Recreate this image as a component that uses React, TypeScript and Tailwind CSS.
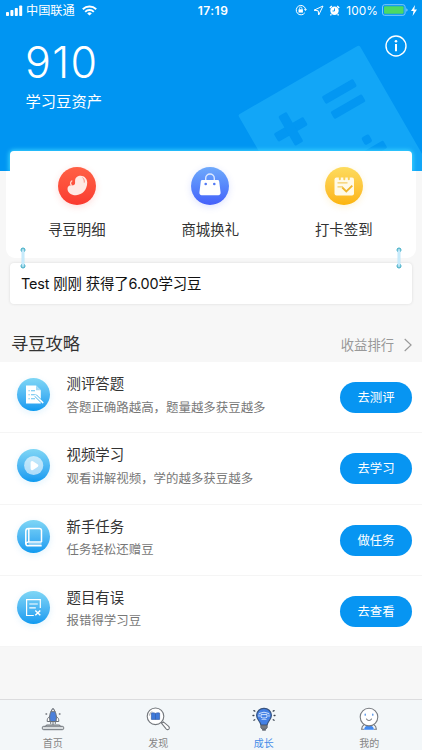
import type { ReactNode } from "react";

function StatusBar() {
  return (
    <div className="relative flex h-5 items-center text-white">
      <svg className="ml-1.5 h-[11px] w-[17px]" viewBox="0 0 17 11" fill="currentColor">
        <rect x="0" y="7" width="3" height="4" rx="0.8" />
        <rect x="4.4" y="5" width="3" height="6" rx="0.8" />
        <rect x="8.8" y="3" width="3" height="8" rx="0.8" />
        <rect x="13.2" y="0.5" width="3" height="10.5" rx="0.8" />
      </svg>
      <span className="mt-[2px] ml-[3px] text-[12.2px] leading-5">中国联通</span>
      <svg className="ml-[7px] h-[11px] w-[15px]" viewBox="0 0 15 11" fill="none" stroke="currentColor" strokeWidth="1.9">
        <path d="M.8 4.2a9.6 9.6 0 0 1 13.4 0M3.2 6.8a6.1 6.1 0 0 1 8.6 0" />
        <path d="M7.5 10.6 5.2 8.4a3.3 3.3 0 0 1 4.6 0z" fill="currentColor" stroke="none" />
      </svg>
      <span className="absolute top-[1px] left-1/2 ml-0.5 -translate-x-1/2 text-[12px] leading-5 font-semibold tracking-[0.5px]">
        17:19
      </span>
      <div className="ml-auto flex items-center">
        <svg className="h-3 w-3" viewBox="0 0 12 12" fill="none" stroke="currentColor">
          <path d="M9.8 8.8A4.7 4.7 0 1 1 10.5 5" />
          <path d="m8.8 5.3 1.8 1.8 1.3-2z" fill="currentColor" stroke="none" />
          <rect x="3.5" y="5.3" width="4.4" height="3.3" fill="currentColor" stroke="none" />
          <path d="M4.5 5.5V4.3a1.2 1.2 0 0 1 2.4 0v1.2" strokeWidth=".8" />
        </svg>
        <svg className="ml-[6px] h-[11px] w-[11px]" viewBox="0 0 11 11" fill="none" stroke="currentColor" strokeLinejoin="round">
          <path d="M10 1 1 5.2l4.2.6.5 4.2z" />
        </svg>
        <svg className="ml-[5px] h-[11px] w-[11px]" viewBox="0 0 11 11">
          <circle cx="5.5" cy="5.8" r="4.2" fill="white" />
          <path d="m.8 3 2-2M10.2 3l-2-2M2.4 9.2 1.4 10.4M8.6 9.2l1 1.2" stroke="white" strokeWidth="1.4" />
          <path d="M5.5 3.4V6h-2" stroke="#0095f2" fill="none" strokeWidth=".9" />
        </svg>
        <span className="mt-px ml-[6px] text-[11.8px] leading-5 tracking-[0.1px]">100%</span>
        <svg className="ml-[4px] h-3 w-[27px]" viewBox="0 0 27 12">
          <rect x=".5" y=".7" width="22.6" height="10.6" rx="2.2" fill="none" stroke="#7fcafa" />
          <rect x="2" y="2.2" width="19.6" height="7.6" rx="1" fill="#4cd964" />
          <path d="M24.4 4.2c1.5.6 1.5 3 0 3.6z" fill="#9bd5fb" />
        </svg>
        <svg className="mr-[5px] ml-[2px] h-[11px] w-[6px]" viewBox="0 0 6 11" fill="currentColor">
          <path d="M4 0 0 6h2.5L1.6 11 6 4.5H3.3z" />
        </svg>
      </div>
    </div>
  );
}

// Tilted calculator drawn behind the balance
function Calculator() {
  return (
    <svg className="absolute top-0 right-0 h-[171px] w-[190px]" viewBox="232 0 190 171">
      <g transform="translate(238 115) rotate(-30)">
        <rect width="140" height="190" rx="2" fill="#12a6f7" />
        <g fill="#0397f2">
          <rect x="21.5" y="34" width="34" height="9.5" rx="1.5" />
          <rect x="34" y="21.5" width="9.5" height="34" rx="1.5" />
          <rect x="81.5" y="26" width="36" height="8.5" rx="1.5" />
          <rect x="81.5" y="43.5" width="36" height="8.5" rx="1.5" />
          <rect x="95" y="81.5" width="8.5" height="8.5" rx="2" />
          <rect x="79" y="94.5" width="34" height="8.5" rx="1.5" />
        </g>
      </g>
    </svg>
  );
}

const shortcuts: { label: string; circle: string; icon: ReactNode }[] = [
  {
    label: "寻豆明细",
    circle: "bg-linear-to-b from-[#ff6045] to-[#fa3a30] shadow-[0_2px_7px_rgba(250,70,60,0.18)]",
    icon: (
      <svg viewBox="0 0 38 38">
        <path d="M18.5 10.2c4.6-3.5 10.8-.4 10.7 5.4-.1 7.4-4.8 12.4-11.2 12.6-4.7.1-8.4-2.7-8.5-6.3 0-2.6 2-4 4.3-3.6 2.3.4 3.4-.5 3.3-2.7-.1-2.3-.1-4.1 1.4-5.4z" fill="#ffe9e4" />
        <path d="M13.6 18.2c-1.5-.8-1.4-3 .2-4.2" fill="none" stroke="#ffd6cd" strokeWidth="1.3" strokeLinecap="round" />
        <path d="M24.8 10.8c1.2 1 1.7 2.8 1.5 4.4" fill="none" stroke="#fb8a7a" strokeWidth="1" strokeLinecap="round" />
      </svg>
    ),
  },
  {
    label: "商城换礼",
    circle: "bg-linear-to-b from-[#6fa9fb] to-[#4660fa] shadow-[0_2px_7px_rgba(70,100,250,0.18)]",
    icon: (
      <svg viewBox="0 0 38 38">
        <path d="M14.7 13v-1.7a4.3 4.3 0 0 1 8.6 0V13" fill="none" stroke="#dce9ff" strokeWidth="1.4" />
        <path d="M11.5 13h15c.9 0 1.5.5 1.7 1.4l1.4 11.2c.2 1.5-.7 2.6-2.2 2.6H10.6c-1.5 0-2.4-1.1-2.2-2.6l1.4-11.2c.2-.9.8-1.4 1.7-1.4z" fill="white" />
        <circle cx="14.7" cy="17" r="1.3" fill="#5279f5" />
        <circle cx="23.3" cy="17" r="1.3" fill="#5279f5" />
      </svg>
    ),
  },
  {
    label: "打卡签到",
    circle: "bg-linear-to-b from-[#fddb5c] to-[#fcb405] shadow-[0_2px_7px_rgba(252,190,20,0.18)]",
    icon: (
      <svg viewBox="0 0 38 38">
        <rect x="9.5" y="10.5" width="19.5" height="18" rx="2" fill="#fffae8" />
        <path d="M14.8 10.2v2M19.3 10.2v2M23.8 10.2v2" stroke="#fbd052" strokeWidth="2" strokeLinecap="round" />
        <path d="M12.5 15.8h10M12.5 19.8h5.5" stroke="#f5cd64" strokeWidth="1.2" />
        <path d="m17.3 20.5 4 4 6-5.8" fill="none" stroke="#efb52d" strokeWidth="1.8" />
      </svg>
    ),
  },
];

const tasks: { title: string; desc: string; action: string; icon: ReactNode }[] = [
  {
    title: "测评答题",
    desc: "答题正确路越高，题量越多获豆越多",
    action: "去测评",
    icon: (
      <>
        <path d="M9 7.5h10l4.8 4.8v13.2H9z" fill="white" />
        <path d="M19 7.5v4.8h4.8z" fill="#a2daf8" />
        <path d="M11.5 12.8h1.2M14 12.8h4M11.5 16.8h1.2M14 16.8h5M11.5 20.8h1.2M14 20.8h4" stroke="#62c0ee" strokeWidth="1.1" />
        <path d="m18.5 17.5 6 6" stroke="#4db4ea" strokeWidth="3" />
        <path d="m18.2 17.2 7.6 7.4" stroke="white" strokeWidth="1.5" strokeLinecap="round" />
      </>
    ),
  },
  {
    title: "视频学习",
    desc: "观看讲解视频，学的越多获豆越多",
    action: "去学习",
    icon: (
      <>
        <circle cx="16.7" cy="16.5" r="9.6" fill="white" fillOpacity=".6" />
        <path d="M14.6 13.6v6c0 .5.4.7.8.5l4.6-2.9c.5-.3.5-.9 0-1.2l-4.6-2.9c-.4-.2-.8 0-.8.5z" fill="white" stroke="white" strokeWidth="2" strokeLinejoin="round" />
      </>
    ),
  },
  {
    title: "新手任务",
    desc: "任务轻松还赠豆",
    action: "做任务",
    icon: (
      <g fill="none" stroke="white" strokeWidth="1.5">
        <path d="M24.5 22V10.6c0-1.4-.8-2.2-2.2-2.2H11.4c-1.7 0-2.6.9-2.6 2.6v12.2c0 1.7 1 2.6 2.6 2.6h13.3" />
        <path d="M24.7 22H11.7c-1.7 0-2.9.6-2.9 2M11.8 9v12.8" />
        <path d="M11.5 24h13" strokeOpacity=".6" />
      </g>
    ),
  },
  {
    title: "题目有误",
    desc: "报错得学习豆",
    action: "去查看",
    icon: (
      <g fill="none" stroke="white" strokeWidth="1.2">
        <path d="M23.3 17V8.6H9.6v15.9h7.2" />
        <path d="M12.3 13h8.5M12.3 16.8h6.5" />
        <path d="m18.3 19.5 5 4.8m0-4.8-5 4.8" strokeWidth="1.5" />
      </g>
    ),
  },
];

const tabs: { label: string; active?: boolean; icon: ReactNode }[] = [
  {
    label: "首页",
    icon: (
      <g stroke="#6b7077" strokeWidth="1" fill="none">
        <path d="M9 9.3c-2 1.1-3 2.6-2.8 5.2h3zM15 9.3c2 1.1 3 2.6 2.8 5.2h-3z" fill="white" />
        <path d="M9.2 14.5c-1.3-5-.3-9.8 2.8-13 3.1 3.2 4.1 8 2.8 13z" fill="#4b80db" />
        <path d="M10.1 4.7c.5-1.3 1.1-2.3 1.9-3.2.8.9 1.4 1.9 1.9 3.2z" fill="white" />
        <path d="M9.7 14.7v2.2M12 14.7v3.2M14.3 14.7v2.2" />
        <rect x="1.3" y="19.3" width="21.4" height="3.4" rx="1.4" fill="#d9dddf" />
        <path d="M4.5 19.3c.2-.9.8-1.3 1.6-1.3h11.8c.8 0 1.4.4 1.6 1.3" fill="#b8bdbf" />
        <path d="M5.3 6v2M4.3 7h2M18.7 6v2M17.7 7h2" strokeWidth=".7" />
      </g>
    ),
  },
  {
    label: "发现",
    icon: (
      <g stroke="#74787d" strokeWidth="1.1" fill="none">
        <circle cx="9.5" cy="9.3" r="8.3" fill="white" />
        <path d="M5.4 6.1c1.5-.4 2.8-.3 4.1.3 1.3-.6 2.6-.7 4.1-.3v6.3H5.4z" fill="#3e79da" stroke="#365fa7" strokeWidth=".7" />
        <path d="M9.5 6.4v6" stroke="#365fa7" strokeWidth=".7" />
        <path d="M3.4 8.6a6 6 0 0 1 2.6-4.2" strokeWidth=".7" />
        <path d="m15.3 15.2 1.3 1.3" />
        <path d="m15.6 16.4 1.8-1.5 5 4.3c1 .9 1.1 2.1.4 2.9-.8.8-2.1.7-2.9-.4z" fill="white" />
      </g>
    ),
  },
  {
    label: "成长",
    active: true,
    icon: (
      <>
        <path d="M12 1.3a7.2 7.2 0 0 0-7.4 7c0 4.4 3.5 5.4 4.3 9.7h6.2c.8-4.3 4.3-5.3 4.3-9.7a7.2 7.2 0 0 0-7.4-7z" fill="#4380e5" stroke="#38547f" strokeWidth="1.2" />
        <path d="m6.8 6.6 5.2-1.4 5.2 1.4M9 7.6h6v2.6c-1.8 1.1-4.2 1.1-6 0zM7 7.6v2.2M17 7.6v2.2" fill="none" stroke="#e1edff" strokeWidth=".9" />
        <path d="M9.5 12.5h5" stroke="#b9d2fb" strokeWidth=".8" />
        <path d="M8.8 18.4h6.4v2.2l-1.3 1.6h-3.8l-1.3-1.6z" fill="#777b81" stroke="#555b64" strokeWidth=".8" />
        <path d="M10.2 23h3.6" stroke="#444a54" strokeWidth="1.2" />
        <path d="m1.9 3.6.9.5M1 8.5h.9M1.9 13.3l.9-.5M22.1 3.6l-.9.5M23 8.5h-.9M22.1 13.3l-.9-.5" stroke="#3d4653" strokeWidth="1.3" strokeLinecap="round" />
      </>
    ),
  },
  {
    label: "我的",
    icon: (
      <g fill="none" stroke="#777b80" strokeWidth="1.1" strokeLinecap="round">
        <path d="M7 17.8c-1.4.9-2.2 2.2-2.4 4.4h1.9M17 17.8c1.4.9 2.2 2.2 2.4 4.4h-1.9" />
        <path d="M7 22.7c.3-2.2 1.4-3.4 3-3.9h4c1.6.5 2.7 1.7 3 3.9z" fill="#438af0" stroke="none" />
        <circle cx="12" cy="10.1" r="8.8" fill="white" />
        <path d="M8.2 7v1.2M15.8 7v1.2" stroke="#4387e4" strokeWidth="1.2" />
        <path d="M9.5 12c1.2 2 3.8 2 5 0" />
      </g>
    ),
  },
];

function Ring({ className }: { className: string }) {
  return (
    <svg className={className} viewBox="0 0 6 22">
      <circle cx="3" cy="3" r="2" fill="#a7dbe8" stroke="#38a9c4" />
      <circle cx="3" cy="19" r="2" fill="#a7dbe8" stroke="#38a9c4" />
      <rect x="1.6" y="3" width="2.8" height="16" rx="1.2" fill="#b5e2f7" />
      <path d="M3 4v14" stroke="#d7f3ff" />
    </svg>
  );
}

export default function App() {
  return (
    <div className="flex h-[750px] w-[422px] flex-col overflow-hidden bg-[#f7f7f7] font-[Inter,'Noto_Sans_CJK_SC',sans-serif] text-[#333]">
      <header className="relative h-[171px] shrink-0 bg-[#0095f2] text-white">
        <Calculator />
        <StatusBar />
        <div className="relative flex justify-between pr-[15px] pl-[25px]">
          <div>
            <div className="mt-[21px] text-[43px] leading-[42px] font-light tracking-[1.3px]">910</div>
            <div className="mt-[8px] ml-[0.5px] text-[15.3px] leading-[22px]">学习豆资产</div>
          </div>
          <svg className="mt-[15px] h-[22px] w-[22px]" viewBox="0 0 22 22" fill="none" stroke="white">
            <circle cx="11" cy="11" r="10" strokeWidth="1.4" />
            <path d="M11 9v7.3" strokeWidth="2" />
            <circle cx="11" cy="6.2" r="1.3" fill="white" stroke="none" />
          </svg>
        </div>
      </header>

      <section className="relative -mt-5 h-[107px] shrink-0">
        <div className="absolute top-0 right-[10.5px] left-[10px] h-5 rounded-t-[4px] bg-white shadow-[0_0_4px_1px_#3cd5ff]" />
        <div className="absolute top-5 right-0 bottom-0 left-0 bg-[#f7f7f7]" />
        <div className="absolute top-5 right-[6px] bottom-0 left-[6px] rounded-b-[9px] bg-white" />
        <div className="relative grid grid-cols-3 pt-[15.5px] pr-[11.5px] pl-[10px]">
          {shortcuts.map((s) => (
            <div key={s.label} className="flex flex-col items-center">
              <div className={`h-[38px] w-[38px] rounded-full ${s.circle}`}>{s.icon}</div>
              <span className="mt-[15px] text-[14.4px] leading-[20px]">{s.label}</span>
            </div>
          ))}
        </div>
      </section>

      <section className="relative mx-[10px] mt-[5px] h-[41px] shrink-0 rounded-[4px] bg-white pl-[11px] text-[14.4px] leading-[42px] tracking-[-0.12px] text-[#111] shadow-[0_0_3px_rgba(0,0,0,0.12)]">
        Test 刚刚 获得了6.00学习豆
        <Ring className="absolute -top-[16px] left-[9.5px] h-[22px] w-[6px]" />
        <Ring className="absolute -top-[16px] right-[10px] h-[22px] w-[6px]" />
      </section>

      <div className="flex h-[58px] shrink-0 items-center justify-between pt-[21px] pr-[10px] pl-[11px]">
        <h2 className="text-[17.3px] leading-6">寻豆攻略</h2>
        <div className="mt-[3px] flex items-center text-[13.3px] leading-5 text-[#999]">
          收益排行
          <svg className="ml-[10px] h-[14px] w-[8px]" viewBox="0 0 8 14" fill="none" stroke="currentColor" strokeWidth="1.1">
            <path d="m.7 1 6.4 6L.7 13" />
          </svg>
        </div>
      </div>

      <ul className="shrink-0 bg-white">
        {tasks.map((t) => (
          <li key={t.title} className="flex h-[71.25px] border-b border-[#f5f5f5] pr-[10px] pl-[17px]">
            <svg className="mt-[15.5px] h-[33px] w-[33px] shrink-0 rounded-full bg-linear-to-b from-[#7ed6f5] to-[#079af0] shadow-[0_2px_7px_rgba(20,160,240,0.12)]" viewBox="0 0 33 33">
              {t.icon}
            </svg>
            <div className="ml-[16.5px] flex-1 pt-[11px]">
              <div className="text-[14.4px] leading-[21px]">{t.title}</div>
              <div className="mt-[4.5px] text-[12.45px] leading-[18px] text-[#777]">{t.desc}</div>
            </div>
            <button className="mt-[20px] h-[31px] w-[72px] rounded-full bg-[#0795f2] pt-[2px] text-[12.4px] text-white">
              {t.action}
            </button>
          </li>
        ))}
      </ul>

      <nav className="mt-auto grid h-[51px] shrink-0 grid-cols-4 border-t border-[#dcdcde] bg-[#f3f7f9]">
        {tabs.map((t) => (
          <div key={t.label} className={`flex flex-col items-center pt-[7px] text-[10px] ${t.active ? "text-[#438be8]" : "text-[#858585]"}`}>
            <svg className="h-6 w-6" viewBox="0 0 24 24">
              {t.icon}
            </svg>
            <span className="mt-[5px] leading-[14px]">{t.label}</span>
          </div>
        ))}
      </nav>
    </div>
  );
}
